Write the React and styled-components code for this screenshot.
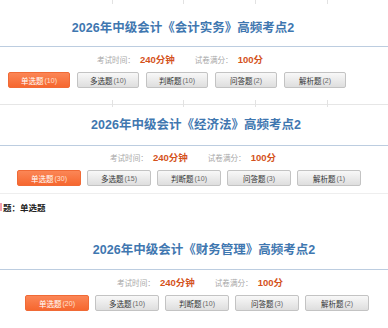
import React from "react";
import styled, { createGlobalStyle } from 'styled-components';

const GlobalStyle = createGlobalStyle`
    body{
        margin: 0;
        background: #fff;
        font-family: "Liberation Sans", "Noto Sans CJK SC", sans-serif;
    }
`

const Wrap = styled.div`
    width: 388px;
    height: 328px;
    overflow: hidden;
    display: flex;
    flex-direction: column;
`

const TickStrip = styled.div`
    height: ${p => p.$h}px;
    margin-top: ${p => p.$mt || 0}px;
    display: grid;
    grid-template-columns: 113px 71px 72px 72px 1fr;
    background: ${p => p.$line ? 'linear-gradient(transparent 4px, #e6e6e6 4px, #e6e6e6 5px, transparent 5px)' : 'none'};
    div{ border-right: 1px solid #e2e2e2; }
    div:last-child{ border-right: none; }
`

const Title = styled.h2`
    margin: ${p => p.$mt}px 0 0;
    padding: ${p => p.$shift > 0 ? `0 0 0 ${p.$shift}px` : `0 ${-p.$shift}px 0 0`};
    height: 18px;
    line-height: 18px;
    text-align: center;
    font-size: 12.5px;
    font-weight: bold;
    color: #3f77b0;
    font-family: "Liberation Sans", "Noto Sans CJK SC", sans-serif;
    white-space: nowrap;
`

const Rule = styled.div`
    margin-top: ${p => p.$mt}px;
    height: 1px;
    background: #bccde0;
`

const Info = styled.div`
    margin-top: ${p => p.$mt}px;
    padding: ${p => p.$shift > 0 ? `0 0 0 ${p.$shift}px` : `0 ${-p.$shift}px 0 0`};
    height: 12px;
    display: flex;
    justify-content: center;
    align-items: center;
    gap: 20px;
`

const InfoItem = styled.span`
    display: flex;
    align-items: center;
    gap: 5px;
    white-space: nowrap;
`

const Label = styled.span`
    font-size: 7.6px;
    color: #a8a8a8;
`

const Value = styled.span`
    font-size: 9.5px;
    font-weight: bold;
    color: #d4521c;
`

const Buttons = styled.div`
    margin-top: ${p => p.$mt}px;
    padding-left: ${p => p.$left}px;
    display: flex;
    gap: ${p => p.$gap}px;
`

const TypeButton = styled.div`
    width: ${p => p.$w}px;
    height: 16px;
    box-sizing: border-box;
    border-radius: 2px;
    display: flex;
    align-items: center;
    justify-content: center;
    font-size: 7.5px;
    white-space: nowrap;
    color: ${p => p.$active ? '#fff' : '#333'};
    background: ${p => p.$active
        ? 'linear-gradient(#fb8656, #f6672f)'
        : 'linear-gradient(#f8f8f8, #dedede)'};
    border: 1px solid ${p => p.$active ? '#f06a36' : '#c3c3c3'};
    span{ color: ${p => p.$active ? '#ffe2d4' : '#666'}; font-size: 7px; margin-left: 1px; }
`

const Faint = styled.div`
    margin-top: ${p => p.$mt}px;
    height: 1px;
    background: #eeeeee;
`

const Question = styled.div`
    margin-top: ${p => p.$mt}px;
    height: 12px;
    display: flex;
    align-items: center;
    font-size: 8.5px;
    font-weight: bold;
    color: #222;
    white-space: nowrap;
    i{
        display: inline-block;
        width: 2px;
        height: 8px;
        background: #f2a0b0;
        margin-right: 1px;
    }
`

const types = ['单选题', '多选题', '判断题', '问答题', '解析题']

const sections = [
    { subject: '会计实务', counts: [10, 10, 10, 2, 2], titleMt: 15, shift: -22, ruleMt: 9, infoMt: 6, infoShift: -28, btnMt: 7, left: 8, w: 62, gap: 7 },
    { subject: '经济法', counts: [30, 15, 10, 3, 1], titleMt: 9, shift: 4, ruleMt: 11, infoMt: 5, infoShift: -2, btnMt: 7, left: 17, w: 64, gap: 6 },
    { subject: '财务管理', counts: [20, 10, 10, 3, 2], titleMt: 28, shift: 20, ruleMt: 10, infoMt: 6, infoShift: 12, btnMt: 7, left: 25, w: 64, gap: 6 },
]

function Exam({ s }){
    return (
        <>
            <Title $mt={s.titleMt} $shift={s.shift}>2026年中级会计《{s.subject}》高频考点2</Title>
            <Rule $mt={s.ruleMt} />
            <Info $mt={s.infoMt} $shift={s.infoShift}>
                <InfoItem><Label>考试时间：</Label><Value>240分钟</Value></InfoItem>
                <InfoItem><Label>试卷满分：</Label><Value>100分</Value></InfoItem>
            </Info>
            <Buttons $mt={s.btnMt} $left={s.left} $gap={s.gap}>
                {types.map((t, i) => (
                    <TypeButton key={t} $w={s.w} $active={i === 0}>{t}<span>({s.counts[i]})</span></TypeButton>
                ))}
            </Buttons>
        </>
    )
}

function App(){
    return (
        <Wrap>
            <GlobalStyle />
            <TickStrip $h={4}><div /><div /><div /><div /><div /></TickStrip>
            <Exam s={sections[0]} />
            <TickStrip $h={7} $mt={12} $line><div /><div /><div /><div /><div /></TickStrip>
            <Exam s={sections[1]} />
            <Faint $mt={7} />
            <Question $mt={7}><i />题：单选题</Question>
            <Exam s={sections[2]} />
        </Wrap>
    )
}

export default App;
